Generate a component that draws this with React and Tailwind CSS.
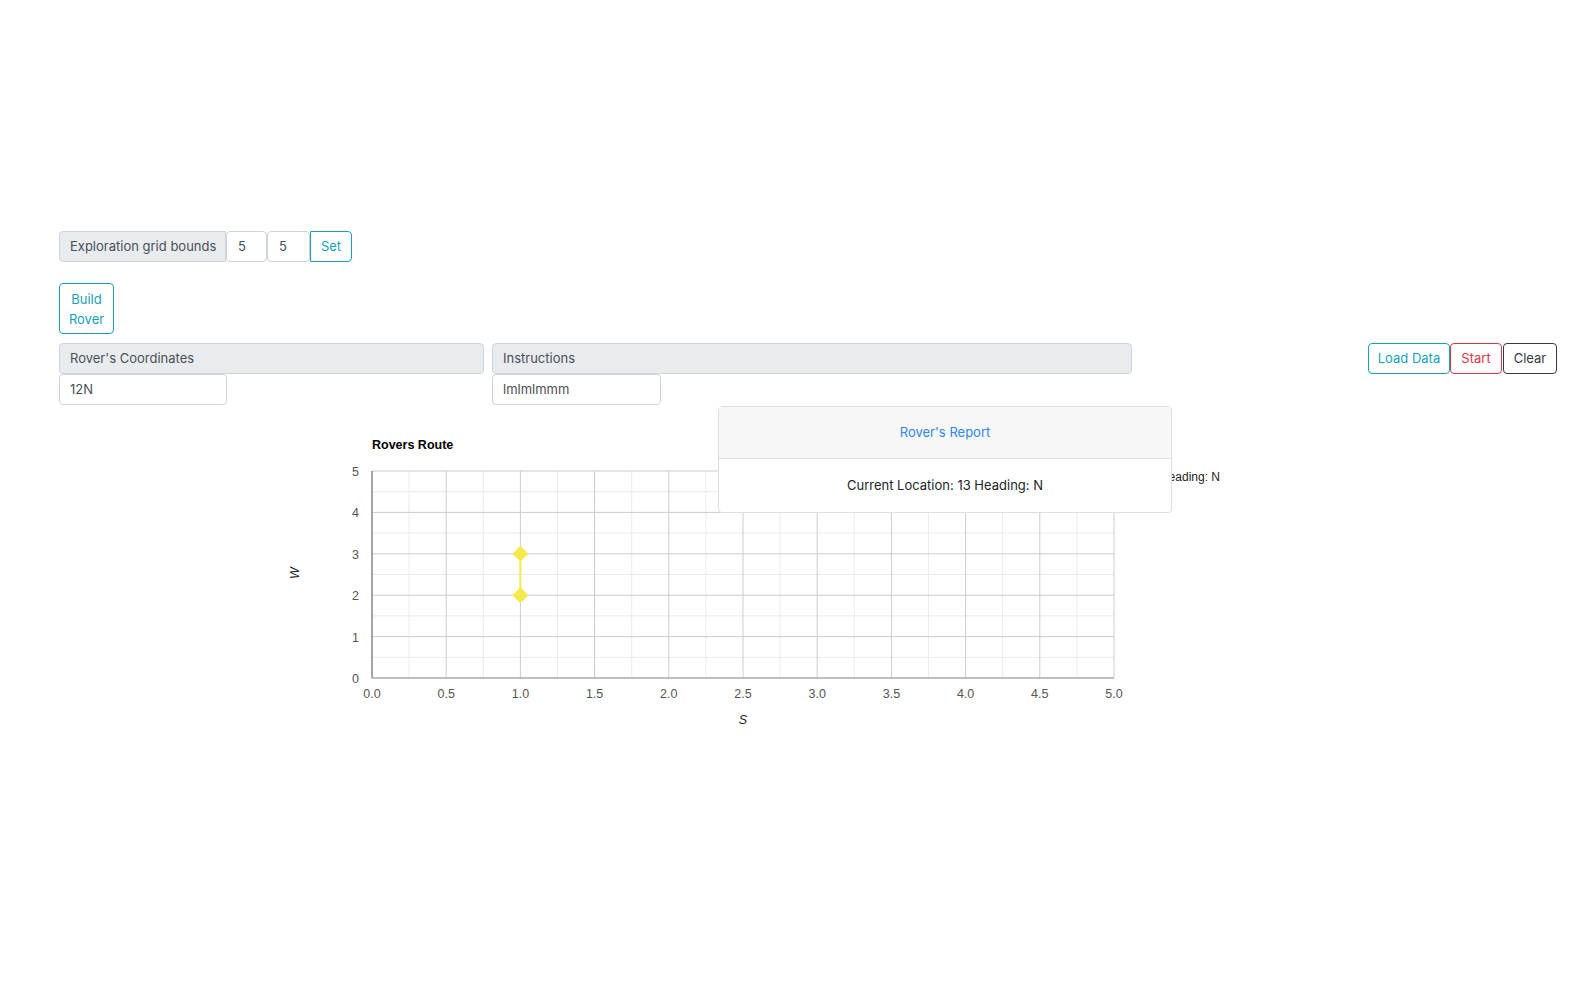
import React from "react";

// chart geometry (svg space)
const PL = 92;
const PT = 66;
const PW = 742;
const PH = 207;
const sx = (v) => PL + (v / 5) * PW;
const sy = (v) => PT + PH - (v / 5) * PH;

function RouteChart() {
    const xMajor = [0, 0.5, 1, 1.5, 2, 2.5, 3, 3.5, 4, 4.5, 5];
    const xMinor = [0.25, 0.75, 1.25, 1.75, 2.25, 2.75, 3.25, 3.75, 4.25, 4.75];
    const yMajor = [0, 1, 2, 3, 4, 5];
    const yMinor = [0.5, 1.5, 2.5, 3.5, 4.5];
    const route = [
        [1, 2],
        [1, 3],
    ];

    return (
        <svg width="960" height="330" className="block" fontFamily="'Liberation Sans', Arial, sans-serif">
            <text x={PL} y="44" fontSize="12.5" fontWeight="bold" fill="#000">
                Rovers Route
            </text>

            {/* minor grid */}
            {xMinor.map((v) => (
                <line key={"xm" + v} x1={sx(v)} x2={sx(v)} y1={PT} y2={PT + PH} stroke="#ebebeb" />
            ))}
            {yMinor.map((v) => (
                <line key={"ym" + v} x1={PL} x2={PL + PW} y1={sy(v)} y2={sy(v)} stroke="#ebebeb" />
            ))}

            {/* major grid */}
            {xMajor.map((v) => (
                <line key={"xM" + v} x1={sx(v)} x2={sx(v)} y1={PT} y2={PT + PH} stroke="#cccccc" />
            ))}
            {yMajor.map((v) => (
                <line key={"yM" + v} x1={PL} x2={PL + PW} y1={sy(v)} y2={sy(v)} stroke="#cccccc" />
            ))}

            {/* baselines */}
            <line x1={PL} x2={PL} y1={PT} y2={PT + PH} stroke="#666" />
            <line x1={PL} x2={PL + PW} y1={PT + PH} y2={PT + PH} stroke="#999" />

            {/* tick labels */}
            {yMajor.map((v) => (
                <text key={"yl" + v} x={PL - 13} y={sy(v) + 5} fontSize="12.5" fill="#555" textAnchor="end">
                    {v}
                </text>
            ))}
            {xMajor.map((v) => (
                <text key={"xl" + v} x={sx(v)} y={PT + PH + 20} fontSize="12.5" fill="#555" textAnchor="middle">
                    {v.toFixed(1)}
                </text>
            ))}

            {/* axis titles */}
            <text x={sx(2.5)} y="319" fontSize="12.5" fill="#222" fontStyle="italic" textAnchor="middle">
                S
            </text>
            <text x="19" y="168" fontSize="12.5" fill="#222" fontStyle="italic" textAnchor="middle" transform="rotate(-90 19 168)">
                W
            </text>

            {/* legend (mostly covered by report card) */}
            <text x="940" y="76" fontSize="12" fill="#222" textAnchor="end">
                Current Location: 13 Heading: N
            </text>

            {/* route */}
            <polyline
                points={route.map(([x, y]) => `${sx(x)},${sy(y)}`).join(" ")}
                fill="none"
                stroke="#f5ea4c"
                strokeWidth="2"
            />
            {route.map(([x, y]) => {
                const cx = sx(x);
                const cy = sy(y);
                return (
                    <polygon
                        key={`${x}-${y}`}
                        points={`${cx},${cy - 8} ${cx + 8},${cy} ${cx},${cy + 8} ${cx - 8},${cy}`}
                        fill="#f5ea4c"
                    />
                );
            })}
        </svg>
    );
}

export default function App() {
    return (
        <div className="min-h-screen bg-white pt-[231px] pl-[59px] pr-[37px] font-['Inter',sans-serif] text-[13px] text-[#212529]">
            {/* grid bounds */}
            <div className="flex h-[31px]">
                <div className="flex items-center w-[167px] px-[10px] whitespace-nowrap bg-[#e9ecef] border border-[#ced4da] rounded-l-[4px] text-[#495057]">
                    Exploration grid bounds
                </div>
                <div className="flex items-center w-[41px] px-[11px] border border-[#ced4da] rounded-[4px] text-[#495057]">5</div>
                <div className="flex items-center w-[43px] px-[11px] border border-[#ced4da] rounded-[4px] text-[#495057]">5</div>
                <button className="w-[42px] border border-[#17a2b8] text-[#17a2b8] rounded-r-[4px]">Set</button>
            </div>

            <button className="mt-[21px] w-[55px] h-[51px] px-[6px] leading-[20px] border border-[#17a2b8] text-[#17a2b8] rounded-[4px]">
                Build Rover
            </button>

            {/* rover inputs */}
            <div className="mt-[9px] flex items-start">
                <div className="flex items-center w-[425px] h-[31px] px-[10px] whitespace-nowrap bg-[#e9ecef] border border-[#ced4da] rounded-[4px] text-[#495057]">
                    Rover's Coordinates
                </div>
                <div className="ml-[8px] flex items-center w-[640px] h-[31px] px-[10px] bg-[#e9ecef] border border-[#ced4da] rounded-[4px] text-[#495057]">
                    Instructions
                </div>
                <div className="ml-auto flex h-[31px] whitespace-nowrap">
                    <button className="w-[82px] border border-[#17a2b8] text-[#17a2b8] rounded-[4px]">Load Data</button>
                    <button className="w-[52px] border border-[#dc3545] text-[#dc3545] rounded-[4px]">Start</button>
                    <button className="ml-px w-[54px] border border-[#343a40] text-[#343a40] rounded-[4px]">Clear</button>
                </div>
            </div>
            <div className="flex">
                <div className="flex items-center w-[168px] h-[31px] px-[10px] border border-[#ced4da] rounded-[4px] text-[#495057]">
                    12N
                </div>
                <div className="ml-[265px] flex items-center w-[169px] h-[31px] px-[10px] border border-[#ced4da] rounded-[4px] text-[#495057]">
                    lmlmlmmm
                </div>
            </div>

            {/* report + chart */}
            <div className="relative">
                <div className="ml-[221px]">
                    <RouteChart />
                </div>
                <div className="absolute left-[659px] top-px w-[454px] bg-white border border-[#dfdfdf] rounded-[4px] text-center">
                    <div className="h-[52px] flex items-center justify-center bg-[#f7f7f7] border-b border-[#dfdfdf] text-[#2f86f5]">
                        Rover's Report
                    </div>
                    <div className="h-[53px] flex items-center justify-center text-[#212529]">
                        Current Location: 13 Heading: N
                    </div>
                </div>
            </div>
        </div>
    );
}
